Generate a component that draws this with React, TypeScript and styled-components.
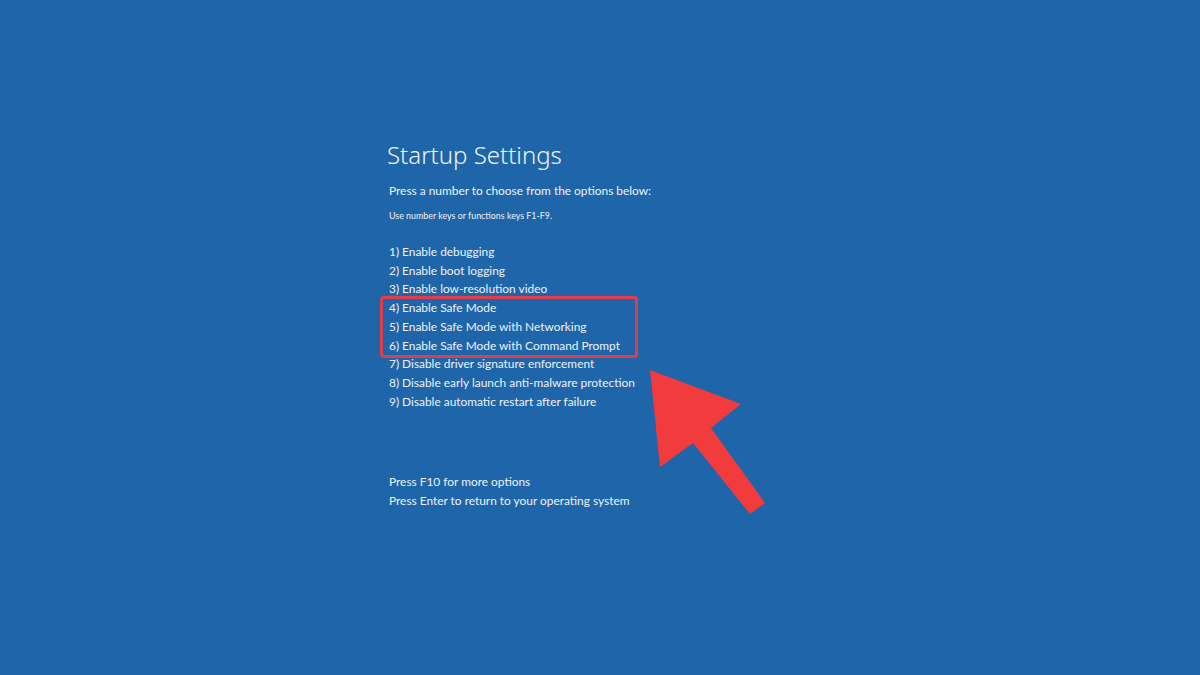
import styled, { createGlobalStyle } from 'styled-components'

const GlobalStyle = createGlobalStyle`
  html, body {
    margin: 0;
    padding: 0;
    background: #1f66a8;
  }
  body {
    font-family: Lato, "Noto Sans", "Liberation Sans", sans-serif;
    color: #eef3f8;
  }
`

const options = [
  '1) Enable debugging',
  '2) Enable boot logging',
  '3) Enable low-resolution video',
  '4) Enable Safe Mode',
  '5) Enable Safe Mode with Networking',
  '6) Enable Safe Mode with Command Prompt',
  '7) Disable driver signature enforcement',
  '8) Disable early launch anti-malware protection',
  '9) Disable automatic restart after failure',
]

// options that get the red highlight box
const highlighted = [3, 4, 5]

const App = () => {
  const before = options.slice(0, highlighted[0])
  const marked = options.slice(highlighted[0], highlighted[highlighted.length - 1] + 1)
  const after = options.slice(highlighted[highlighted.length - 1] + 1)

  return (
    <>
      <GlobalStyle />
      <Screen>
        <Panel>
          <Title>Startup Settings</Title>
          <Lead>Press a number to choose from the options below:</Lead>
          <Hint>Use number keys or functions keys F1-F9.</Hint>
          <OptionList>
            {before.map(o => <Option key={o}>{o}</Option>)}
            <Highlight>
              {marked.map(o => <Option key={o}>{o}</Option>)}
            </Highlight>
            {after.map(o => <Option key={o}>{o}</Option>)}
          </OptionList>
          <Footer>
            <Option>Press F10 for more options</Option>
            <Option>Press Enter to return to your operating system</Option>
          </Footer>
        </Panel>
        <Arrow viewBox="0 0 130 150" width="130" height="150">
          <polygon
            fill="#f23b3c"
            points="5,5 96,39 66,63 120,138 105,149 48,78 15,102"
          />
        </Arrow>
      </Screen>
    </>
  )
}

export default App

const Screen = styled.div`
  position: relative;
  width: 1200px;
  height: 675px;
  overflow: hidden;
  background: #1f66a8;
`
// the faint inner area of the boot screen
const Panel = styled.div`
  margin-left: 277px;
  width: 640px;
  height: 568px;
  box-sizing: border-box;
  padding: 138px 0 0 112px;
  background: #1f65a9;
`
const Title = styled.div`
  font-family: "Noto Sans", "Open Sans", sans-serif;
  font-size: 24px;
  font-weight: 300;
  line-height: 34px;
  margin-left: -2px;
`
const Lead = styled.div`
  font-size: 11.9px;
  line-height: 18px;
  margin-top: 10px;
`
const Hint = styled.div`
  font-size: 8.9px;
  line-height: 12px;
  margin-top: 10px;
`
const OptionList = styled.div`
  display: flex;
  flex-direction: column;
  margin-top: 21px;
`
const Option = styled.div`
  font-size: 11.9px;
  line-height: 18.7px;
  white-space: nowrap;
`
// red rounded outline around the safe mode options
const Highlight = styled.div`
  display: flex;
  flex-direction: column;
  margin: -3px 0 -3px -9px;
  padding: 0 0 0 6px;
  width: 246px;
  border: 3px solid #e23d4c;
  border-radius: 4px;
`
const Footer = styled.div`
  display: flex;
  flex-direction: column;
  margin-top: 62px;
`
const Arrow = styled.svg`
  position: absolute;
  left: 645px;
  top: 365px;
`
